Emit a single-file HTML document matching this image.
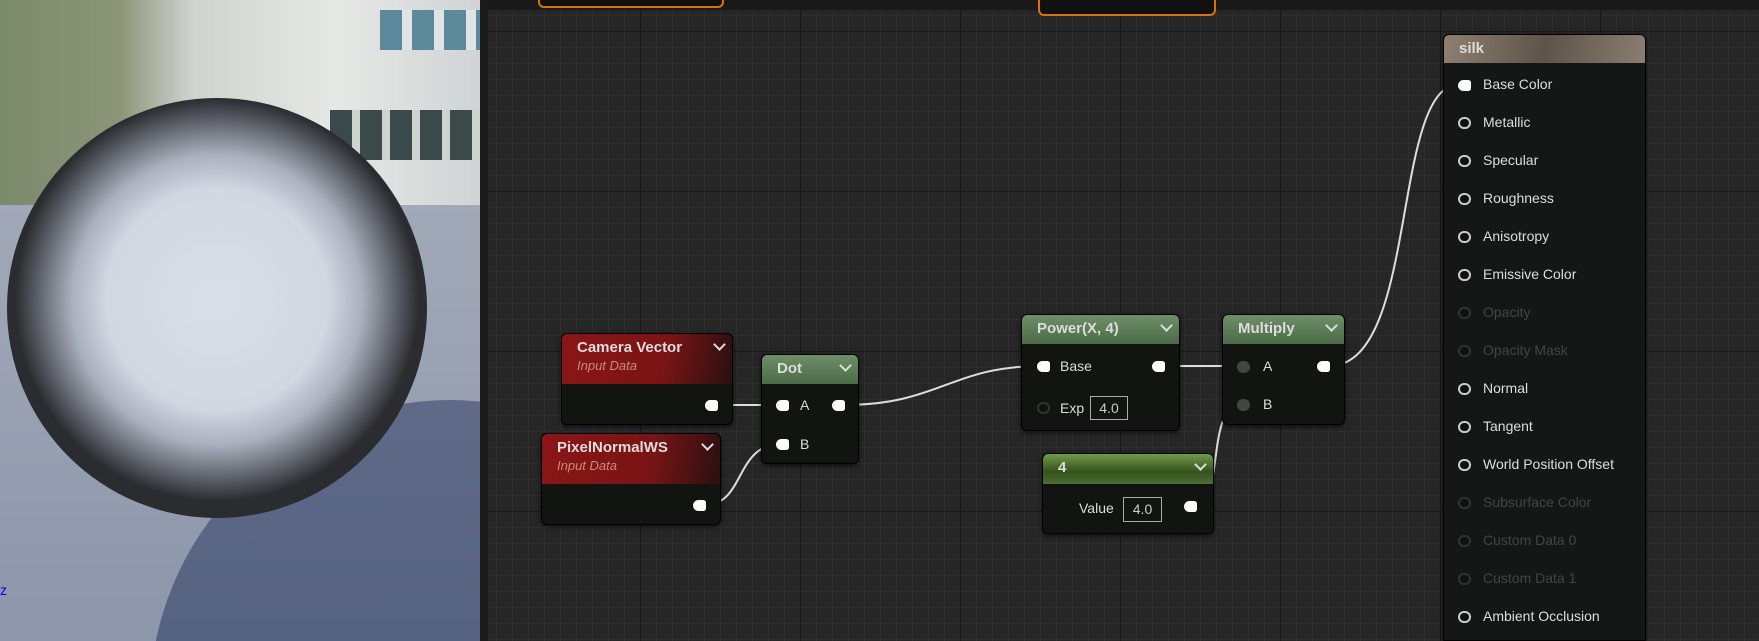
<!DOCTYPE html>
<html><head><meta charset="utf-8"><style>
*{margin:0;padding:0;box-sizing:border-box}
html,body{width:1759px;height:641px;overflow:hidden}
body{background:#262626;font-family:"Liberation Sans",sans-serif;position:relative}
#vp{position:absolute;left:0;top:0;width:480px;height:641px;overflow:hidden;background:linear-gradient(180deg,#9aa7a0 0%,#c9cfc9 20%,#d8dcd8 33%,#9ea6b4 34%,#8790a6 60%,#6a7593 100%)}
#graph{position:absolute;left:480px;top:0;width:1279px;height:641px;background-color:#262626;
background-image:linear-gradient(#181818 1px,transparent 1px),linear-gradient(90deg,#181818 1px,transparent 1px),linear-gradient(#2e2e2e 1px,transparent 1px),linear-gradient(90deg,#2e2e2e 1px,transparent 1px);
background-size:160px 160px,160px 160px,16px 16px,16px 16px;background-position:0 31px,0 0,0 15px,0 0}
.node{position:absolute;background:#121412;border:1px solid #000;border-radius:6px;box-shadow:0 2px 4px rgba(0,0,0,.6);overflow:hidden}
.hd{position:relative;color:#ddd;font-weight:bold;font-size:15px;padding:5px 0 0 15px}
.red{background:linear-gradient(100deg,#8a1616 0%,#7a1414 60%,#2a1010 100%)}
.grn{background:linear-gradient(180deg,#6e8f68,#4a6b45)}
.sub{font-style:italic;font-weight:normal;font-size:13px;color:#c98a7a;margin-top:2px}
.chev{position:absolute;right:8px;top:6px;width:9px;height:9px;border-right:2px solid #ddd;border-bottom:2px solid #ddd;transform:rotate(45deg)}
.pin{position:absolute;width:13px;height:11px;border-radius:6px 3px 3px 6px;background:#fff}
.pino{position:absolute;width:13px;height:12px;border-radius:6px;border:2px solid #ccc;background:#111}
.pind{position:absolute;width:13px;height:12px;border-radius:6px;background:#444}
.lbl{position:absolute;color:#ddd;font-size:14px}
.box{position:absolute;border:1px solid #aaa;color:#ccc;font-size:14px;text-align:center;line-height:22px}
</style></head><body>
<div id="vp">
 <div style="position:absolute;left:0;top:0;width:480px;height:210px;background:linear-gradient(90deg,#7a8a6a 0%,#8c9578 25%,#cfd3d0 40%,#e6e8e6 70%,#d0d4d4 100%)"></div>
 <div style="position:absolute;left:330px;top:110px;width:150px;height:50px;background:repeating-linear-gradient(90deg,#3a4a4a 0 22px,#cfd3d0 22px 30px)"></div>
 <div style="position:absolute;left:380px;top:10px;width:100px;height:40px;background:repeating-linear-gradient(90deg,#5c8a9c 0 22px,#e0e4e4 22px 32px)"></div>
 <div style="position:absolute;left:0;top:205px;width:480px;height:436px;background:linear-gradient(180deg,#a1a9b8,#8d96aa)"></div>
 <div style="position:absolute;left:150px;top:400px;width:600px;height:600px;border-radius:50%;background:linear-gradient(180deg,#5e6a88,#4a5676)"></div>
 <div style="position:absolute;left:7px;top:98px;width:420px;height:420px;border-radius:50%;background:radial-gradient(closest-side circle at 50% 48%,#d9dfe8 0%,#d2d8e2 55%,#aab0bc 72%,#6a6e78 86%,#2a2c30 100%)"></div>
 <div style="position:absolute;left:0;top:582px;color:#00f;font-size:14px">z</div>
</div>
<div id="graph">
 <div style="position:absolute;left:0;top:0;width:1279px;height:10px;background:#191919"></div>
 <div style="position:absolute;left:0;top:0;width:8px;height:641px;background:#1b1b1b"></div>
 <div style="position:absolute;left:58px;top:-10px;width:186px;height:18px;border:2px solid #d9720c;border-radius:0 0 6px 6px;background:#111"></div>
 <div style="position:absolute;left:558px;top:-10px;width:178px;height:26px;border:2px solid #d9720c;border-radius:0 0 6px 6px;background:#111"></div>
</div>
<svg style="position:absolute;left:0;top:0" width="1759" height="641">
<g fill="none" stroke="#ddd" stroke-width="2">
<path d="M717 405 L781 405"/>
<path d="M705 505 C745 505,735 444,781 444"/>
<path d="M843 405 C940 405,950 366,1042 366"/>
<path d="M1163 366 L1242 366"/>
<path d="M1195 506 C1225 506,1205 404,1242 404"/>
<path d="M1329 366 C1420 366,1390 84,1460 84"/>
</g></svg>

<div class="node" style="left:561px;top:333px;width:172px;height:92px">
 <div class="hd red" style="height:50px">Camera Vector<div class="sub">Input Data</div><div class="chev"></div></div>
 <div class="pin" style="left:143px;top:66px"></div>
</div>
<div class="node" style="left:541px;top:433px;width:180px;height:92px">
 <div class="hd red" style="height:50px">PixelNormalWS<div class="sub">Input Data</div><div class="chev"></div></div>
 <div class="pin" style="left:151px;top:66px"></div>
</div>
<div class="node" style="left:761px;top:354px;width:98px;height:110px">
 <div class="hd grn" style="height:29px">Dot<div class="chev"></div></div>
 <div class="pin" style="left:14px;top:45px"></div><div class="lbl" style="left:38px;top:42px">A</div>
 <div class="pin" style="left:70px;top:45px"></div>
 <div class="pin" style="left:14px;top:84px"></div><div class="lbl" style="left:38px;top:81px">B</div>
</div>
<div class="node" style="left:1021px;top:314px;width:159px;height:117px">
 <div class="hd grn" style="height:29px">Power(X, 4)<div class="chev"></div></div>
 <div class="pin" style="left:15px;top:46px"></div><div class="lbl" style="left:38px;top:43px">Base</div>
 <div class="pin" style="left:130px;top:46px"></div>
 <div class="pino" style="left:15px;top:87px;border-color:#333"></div><div class="lbl" style="left:38px;top:85px">Exp</div>
 <div class="box" style="left:68px;top:81px;width:38px;height:24px">4.0</div>
</div>
<div class="node" style="left:1222px;top:314px;width:123px;height:111px">
 <div class="hd grn" style="height:29px">Multiply<div class="chev"></div></div>
 <div class="pind" style="left:14px;top:46px"></div><div class="lbl" style="left:40px;top:43px">A</div>
 <div class="pin" style="left:94px;top:46px"></div>
 <div class="pind" style="left:14px;top:84px"></div><div class="lbl" style="left:40px;top:81px">B</div>
</div>
<div class="node" style="left:1042px;top:453px;width:172px;height:81px">
 <div class="hd" style="height:30px;background:linear-gradient(180deg,#6f9a4a,#35521e 60%,#4a6e30)">4<div class="chev"></div></div>
 <div class="lbl" style="left:36px;top:46px">Value</div>
 <div class="box" style="left:80px;top:43px;width:39px;height:25px">4.0</div>
 <div class="pin" style="left:141px;top:47px"></div>
</div>
<div class="node" style="left:1443px;top:34px;width:203px;height:607px;background:#151716;border-radius:6px 6px 0 0">
 <div class="hd" style="height:28px;background:linear-gradient(100deg,#8f7f70,#5f544a 50%,#8a7c70);color:#ddd">silk</div>
 <div class="pin" style="left:14px;top:45px"></div><div class="lbl" style="left:39px;top:41px">Base Color</div>
 <div class="pino" style="left:14px;top:82px"></div><div class="lbl" style="left:39px;top:79px">Metallic</div>
 <div class="pino" style="left:14px;top:120px"></div><div class="lbl" style="left:39px;top:117px">Specular</div>
 <div class="pino" style="left:14px;top:158px"></div><div class="lbl" style="left:39px;top:155px">Roughness</div>
 <div class="pino" style="left:14px;top:196px"></div><div class="lbl" style="left:39px;top:193px">Anisotropy</div>
 <div class="pino" style="left:14px;top:234px"></div><div class="lbl" style="left:39px;top:231px">Emissive Color</div>
 <div class="pino" style="left:14px;top:272px;border-color:#333"></div><div class="lbl" style="left:39px;top:269px;color:#444">Opacity</div>
 <div class="pino" style="left:14px;top:310px;border-color:#333"></div><div class="lbl" style="left:39px;top:307px;color:#444">Opacity Mask</div>
 <div class="pino" style="left:14px;top:348px"></div><div class="lbl" style="left:39px;top:345px">Normal</div>
 <div class="pino" style="left:14px;top:386px"></div><div class="lbl" style="left:39px;top:383px">Tangent</div>
 <div class="pino" style="left:14px;top:424px"></div><div class="lbl" style="left:39px;top:421px">World Position Offset</div>
 <div class="pino" style="left:14px;top:462px;border-color:#333"></div><div class="lbl" style="left:39px;top:459px;color:#444">Subsurface Color</div>
 <div class="pino" style="left:14px;top:500px;border-color:#333"></div><div class="lbl" style="left:39px;top:497px;color:#444">Custom Data 0</div>
 <div class="pino" style="left:14px;top:538px;border-color:#333"></div><div class="lbl" style="left:39px;top:535px;color:#444">Custom Data 1</div>
 <div class="pino" style="left:14px;top:576px"></div><div class="lbl" style="left:39px;top:573px">Ambient Occlusion</div>
</div>
</body></html>
